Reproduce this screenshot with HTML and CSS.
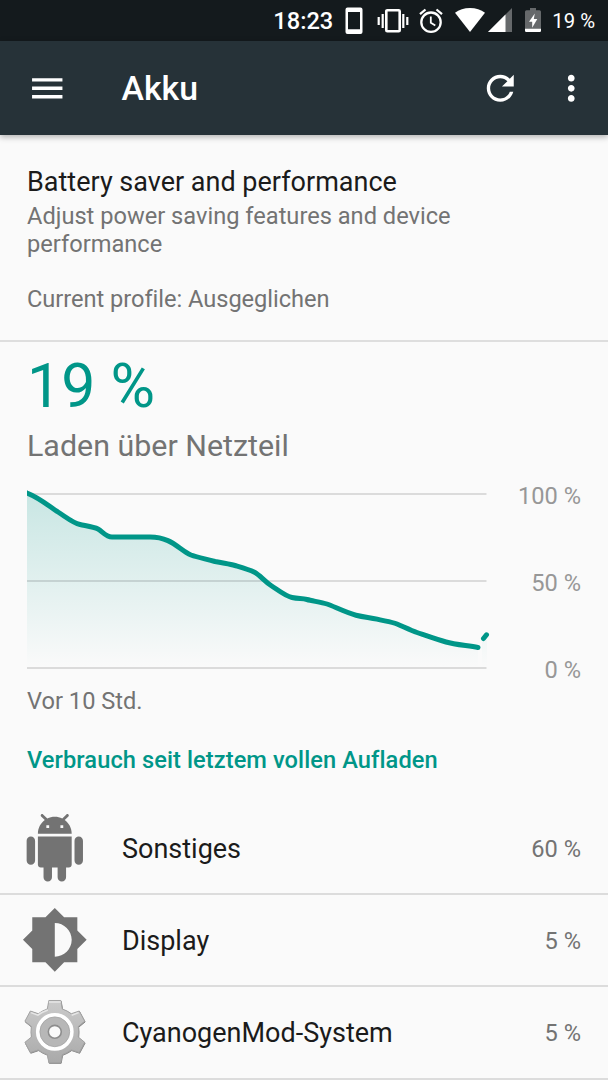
FILE: index.html
```
<!DOCTYPE html>
<html lang="de">
<head>
  <meta charset="UTF-8">
  <meta name="viewport" content="width=device-width, initial-scale=1.0">
  <title>Akku</title>
  <link rel="stylesheet" href="styles.css">
</head>
<body>
  <div class="status-bar">
    <span class="clock">18:23</span>
    <svg class="st-phone" width="18" height="28" viewBox="0 0 18 28">
      <path fill="#fff" fill-rule="evenodd" d="M2.500 .5h13a2 2 0 0 1 2 2v22.500a2 2 0 0 1-2 2h-13a2 2 0 0 1-2-2v-22.500a2 2 0 0 1 2-2zM3 5v17.300h12V5z"/>
    </svg>
    <svg class="st-vibrate" width="32" height="26" viewBox="0 0 32 26">
      <rect x="9.300" y="3.200" width="13.400" height="21" rx="1" fill="none" stroke="#fff" stroke-width="2.600"/>
      <path d="M5.700 7v14M1.700 10v8M26.300 7v14M30.300 10v8" stroke="#fff" stroke-width="2.200"/>
    </svg>
    <svg class="st-alarm" width="24" height="26" viewBox="0 0 24 26">
      <g fill="none" stroke="#fff" stroke-width="2.300">
        <circle cx="12" cy="14.200" r="9.700"/>
        <path d="M1 6.200L6.500 1.500M23 6.200L17.500 1.500"/>
        <path d="M11.800 8.500v6.200l4.500 2.800" stroke-width="1.800"/>
      </g>
    </svg>
    <svg class="st-wifi" width="30" height="24" viewBox="0 0 30 24">
      <path fill="#fff" d="M0 4.800C4 1.700 9.200 0 15 0s11 1.700 15 4.800L15 24z"/>
    </svg>
    <svg class="st-signal" width="24" height="24" viewBox="0 0 24 24">
      <path fill="#fff" fill-opacity=".35" d="M0 24L24 0v24z"/>
      <path fill="#fff" d="M0 24L17.500 6.500V24z"/>
    </svg>
    <svg class="st-battery" width="16" height="24" viewBox="0 0 16 24">
      <path fill="#fff" fill-opacity=".35" d="M5 0h6v2.300h3.500a1.500 1.500 0 0 1 1.500 1.500V20H0V3.800a1.500 1.500 0 0 1 1.500-1.500H5z"/>
      <path fill="#fff" d="M0 20.500h16v2.300a1.200 1.200 0 0 1-1.200 1.200H1.200A1.200 1.200 0 0 1 0 22.800zM9.800 5.500L4 13.800h3.200V19.800L12.300 11H8.800z"/>
    </svg>
    <span class="level">19 %</span>
  </div>

  <header class="toolbar">
    <svg class="icon" viewBox="0 0 24 24"><path d="M3 18h18v-2H3v2zm0-5h18v-2H3v2zm0-7v2h18V6H3z"/></svg>
    <h1>Akku</h1>
    <svg class="icon" viewBox="0 0 24 24"><path d="M17.650 6.350C16.200 4.900 14.210 4 12 4c-4.420 0-7.990 3.580-7.990 8s3.570 8 7.990 8c3.730 0 6.840-2.550 7.730-6h-2.080c-.82 2.330-3.040 4-5.650 4-3.310 0-6-2.690-6-6s2.690-6 6-6c1.660 0 3.140.69 4.220 1.780L13 11h7V4l-2.350 2.350z"/></svg>
    <svg class="icon icon-more" viewBox="0 0 24 24"><path d="M12 8c1.100 0 2-.9 2-2s-.9-2-2-2-2 .9-2 2 .9 2 2 2zm0 2c-1.100 0-2 .9-2 2s.9 2 2 2 2-.9 2-2-.9-2-2-2zm0 6c-1.100 0-2 .9-2 2s.9 2 2 2 2-.9 2-2-.9-2-2-2z"/></svg>
  </header>

  <section class="profile">
    <h2>Battery saver and performance</h2>
    <p>Adjust power saving features and device performance</p>
    <p class="current">Current profile: Ausgeglichen</p>
  </section>

  <section class="battery">
    <div class="percent">19 %</div>
    <div class="state">Laden über Netzteil</div>

    <div class="chart">
      <svg width="465" height="202" viewBox="27 482 465 202">
        <defs>
          <linearGradient id="fade" gradientUnits="userSpaceOnUse" x1="0" y1="493" x2="0" y2="668">
            <stop offset="0" stop-color="#009688" stop-opacity=".2"/>
            <stop offset="1" stop-color="#009688" stop-opacity="0"/>
          </linearGradient>
        </defs>
        <path fill="url(#fade)" d="M27 493C40 498 50 507 58 512S73 523 80 524.500S94 527 98 529S106 537 112 537H150C172 537 179 550 191 555C199 558 207 559 215 561.500C225 563.500 230 564 235 565.500S249 569.500 254 572C260 575 264 581 271 585.500S285 596 292 597.500S302 598 307 599.500S321 602 327 604S347 613 356 615.200S371 617.500 377 619.200S391 621.500 397 624S411 630.500 417 632.500S437 639.500 446 642S467 645.500 478 647.500V668H27zM482 640L487 634V668H482z"/>
        <path class="grid" d="M27 494H486.500M27 581H486.500M27 668H486.500"/>
        <path class="line" d="M24 491.700L27 493C40 498 50 507 58 512S73 523 80 524.500S94 527 98 529S106 537 112 537H150C172 537 179 550 191 555C199 558 207 559 215 561.500C225 563.500 230 564 235 565.500S249 569.500 254 572C260 575 264 581 271 585.500S285 596 292 597.500S302 598 307 599.500S321 602 327 604S347 613 356 615.200S371 617.500 377 619.200S391 621.500 397 624S411 630.500 417 632.500S437 639.500 446 642S467 645.500 478 647.500M483.500 638.500L486.500 634.800"/>
      </svg>
      <div class="scale">
        <span>100 %</span>
        <span>50 %</span>
        <span>0 %</span>
      </div>
    </div>
    <div class="since">Vor 10 Std.</div>
  </section>

  <h3>Verbrauch seit letztem vollen Aufladen</h3>

  <ul class="usage">
    <li>
      <svg class="app" viewBox="0 0 24 24"><path d="M6 18c0 .55.45 1 1 1h1v3.500c0 .83.67 1.500 1.500 1.500s1.500-.67 1.500-1.500V19h2v3.500c0 .83.67 1.500 1.500 1.500s1.500-.67 1.500-1.500V19h1c.55 0 1-.45 1-1V8H6v10zM3.500 8C2.670 8 2 8.670 2 9.500v7c0 .83.67 1.500 1.500 1.500S5 17.330 5 16.500v-7C5 8.670 4.330 8 3.500 8zm17 0c-.83 0-1.500.67-1.500 1.500v7c0 .83.67 1.500 1.500 1.500s1.500-.67 1.500-1.500v-7c0-.83-.67-1.500-1.500-1.500zm-4.970-5.840l1.300-1.300c.2-.2.2-.51 0-.71-.2-.2-.51-.2-.71 0l-1.480 1.480C13.850 1.230 12.950 1 12 1c-.96 0-1.860.23-2.660.63L7.850.15c-.2-.2-.51-.2-.71 0-.2.2-.2.51 0 .71l1.310 1.310C6.970 3.260 6 5.010 6 7h12c0-1.990-.97-3.750-2.470-4.840zM10 5H9V4h1v1zm5 0h-1V4h1v1z"/></svg>
      <span class="name">Sonstiges</span>
      <span class="value">60 %</span>
    </li>
    <li>
      <svg class="app" viewBox="0 0 24 24"><path d="M20 15.310L23.310 12 20 8.690V4h-4.690L12 .69 8.690 4H4v4.690L.69 12 4 15.310V20h4.690L12 23.310 15.310 20H20v-4.690zM12 18V6c3.310 0 6 2.690 6 6s-2.690 6-6 6z"/></svg>
      <span class="name">Display</span>
      <span class="value">5 %</span>
    </li>
    <li>
      <svg class="app gear" viewBox="-34 -34 68 68">
        <defs>
          <linearGradient id="metal" gradientUnits="userSpaceOnUse" x1="0" y1="-32" x2="0" y2="32">
            <stop offset="0" stop-color="#cbcbcb"/>
            <stop offset="1" stop-color="#a9a9a9"/>
          </linearGradient>
          <path id="cog" d="M-6-31.500H6L7.500-23Q13-21 16.600-18.200L24.600-20.900L30.100-10.600L23.600-5.300Q24.300 0 23.600 5.300L30.100 10.600L24.600 20.900L16.600 18.200Q13 21 7.500 23L6 31H-6L-7.500 23Q-13 21-16.600 18.200L-24.600 20.900L-30.100 10.600L-23.600 5.300Q-24.300 0-23.600-5.300L-30.100-10.600L-24.600-20.900L-16.600-18.200Q-13-21-7.500-23z"/>
        </defs>
        <use href="#cog" x=".4" y=".7" fill="#858585" stroke="#858585"/>
        <use href="#cog" fill="url(#metal)" stroke="#a3a3a3" stroke-width="1"/>
        <path d="M-6-30H6M-24-19.300L-17-16.700Q-13-20-7-22M17-16.700L24-19.300" fill="none" stroke="#e6e6e6" stroke-width="1.500"/>
        <circle r="17" fill="#b7b7b7" stroke="#fff" stroke-width="4"/>
        <circle r="15" fill="none" stroke="#a2a2a2" stroke-width=".8"/>
        <circle r="6.500" fill="#fafafa" stroke="#8d8d8d" stroke-width="1.600"/>
      </svg>
      <span class="name">CyanogenMod-System</span>
      <span class="value">5 %</span>
    </li>
  </ul>
</body>
</html>
```
FILE: styles.css
```
* {
  box-sizing: border-box;
}
body {
  margin: 0;
  height: 1080px;
  overflow: hidden;
  background-color: #fafafa;
  color: #737373;
  font-family: Roboto, sans-serif;
  font-size: 23.64px;
  line-height: 28px;
}
h1, h2, h3, p, ul {
  margin: 0;
  padding: 0;
  font-weight: 400;
}
svg {
  display: block;
  flex: none;
}
.status-bar {
  display: flex;
  justify-content: flex-end;
  height: 40.5px;
  padding: 7px 13px 0 0;
  background-color: #141a1d;
  color: #fff;
}
.clock {
  font-weight: 500;
}
.st-phone {
  margin-left: 12px;
}
.st-vibrate {
  margin: 0 0 0 14px;
}
.st-alarm {
  margin: 1px 0 0 10px;
}
.st-wifi {
  margin: 1px 0 0 12px;
}
.st-signal {
  margin: 1px 0 0 3px;
}
.st-battery {
  margin: 1px 0 0 13px;
}
.level {
  margin-left: 11px;
  font-size: 20.3px;
}
.toolbar {
  display: flex;
  align-items: center;
  height: 94.5px;
  padding: 0 17px 0 27px;
  background-color: #263238;
  box-shadow: 0 2px 6px rgba(0, 0, 0, 0.3);
  color: #fff;
}
.toolbar h1 {
  flex: 1;
  margin: 3px 0 0 54px;
  font-size: 33.8px;
  font-weight: 500;
}
.icon {
  width: 40.5px;
  height: 40.5px;
  fill: #fff;
}
.icon-more {
  margin-left: 30.5px;
}
.profile {
  height: 207px;
  padding: 31px 100px 0 27px;
  border-bottom: 2px solid #dedede;
  line-height: 27.5px;
}
.profile h2 {
  margin-bottom: 5px;
  color: #1b1b1b;
  font-size: 27px;
  line-height: 32px;
}
.current {
  padding-top: 27.5px;
  letter-spacing: -0.04px;
}
.battery {
  padding: 9px 27px 0;
}
.percent {
  color: #009688;
  font-size: 60.8px;
  line-height: 71px;
}
.state {
  margin-top: 6px;
  font-size: 30.4px;
  line-height: 36px;
}
.chart {
  display: flex;
  justify-content: space-between;
  height: 202px;
  margin-top: 18px;
}
.grid {
  stroke: #000;
  stroke-opacity: 0.12;
  stroke-width: 2;
}
.line {
  fill: none;
  stroke: #009688;
  stroke-width: 5;
  stroke-linecap: round;
  stroke-linejoin: round;
}
.scale {
  display: flex;
  flex-direction: column;
  justify-content: space-between;
  color: #979797;
  text-align: right;
}
.since {
  margin-top: 3px;
}
h3 {
  margin: 31px 27px 29px;
  color: #009688;
  font-size: 23.64px;
  font-weight: 500;
  letter-spacing: 0.08px;
}
.usage {
  list-style: none;
}
.usage li {
  display: flex;
  align-items: center;
  height: 92.2px;
  padding: 0 27px 0 20.7px;
  border-bottom: 2px solid #dcdcdc;
}
.app {
  width: 67.6px;
  height: 67.6px;
  fill: #737373;
}
.name {
  flex: 1;
  margin: 2px 0 0 33.7px;
  color: #1b1b1b;
  font-size: 27px;
}
.value {
  margin-top: 2px;
}
.gear {
  margin-top: -2px;
}
```
